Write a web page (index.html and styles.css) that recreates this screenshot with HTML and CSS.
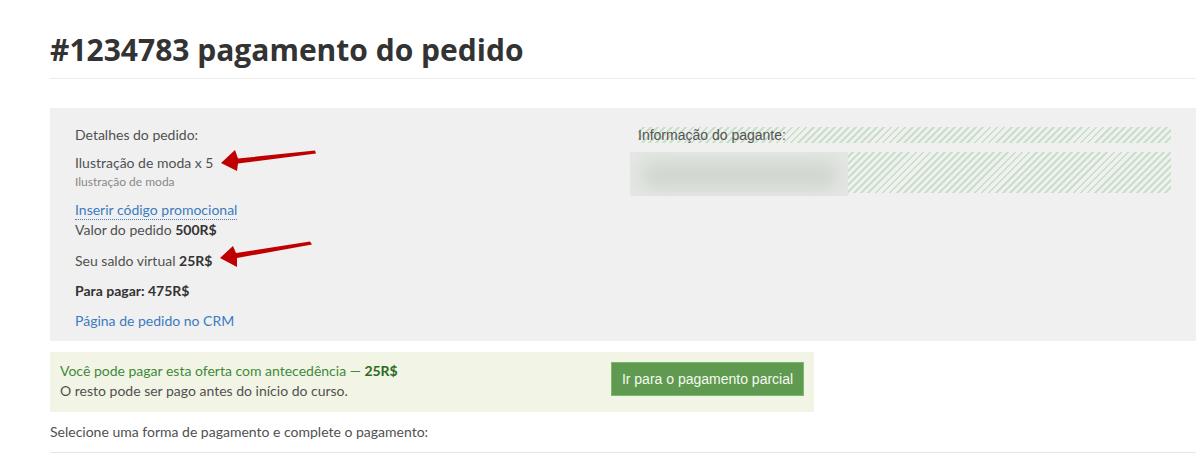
FILE: index.html
```html
<!DOCTYPE html>
<html lang="pt">
<head>
<meta charset="utf-8">
<title>Pagamento do pedido</title>
<link rel="stylesheet" href="styles.css">
</head>
<body>
<div class="page">
  <h1 class="title">#1234783 pagamento do pedido</h1>

  <section class="order">
    <div class="details">
      <div class="label">Detalhes do pedido:</div>
      <div class="item">Ilustração de moda x 5</div>
      <div class="item-sub">Ilustração de moda</div>
      <a class="promo" href="#">Inserir código promocional</a>
      <div class="row">Valor do pedido <b>500R$</b></div>
      <div class="row gap">Seu saldo virtual <b>25R$</b></div>
      <div class="row gap total">Para pagar: 475R$</div>
      <a class="crm" href="#">Página de pedido no CRM</a>
    </div>
    <div class="payer">
      <div class="payer-label hatch"><span>Informação do pagante:</span></div>
      <div class="payer-data hatch">
        <div class="blurred"><div class="blob"></div></div>
      </div>
    </div>
  </section>

  <section class="partial">
    <div class="partial-text">
      <div class="offer">Você pode pagar esta oferta com antecedência — <b>25R$</b></div>
      <div class="rest">O resto pode ser pago antes do início do curso.</div>
    </div>
    <button class="partial-btn" type="button">Ir para o pagamento parcial</button>
  </section>

  <div class="select">Selecione uma forma de pagamento e complete o pagamento:</div>
</div>

<svg class="arrows" width="1200" height="457" viewBox="0 0 1200 457" aria-hidden="true">
  <polygon fill="#c00000" points="221,163 235,150 238,158.5 315,150.5 316,153.5 238,163.5 237,171"/>
  <polygon fill="#c00000" points="220,258 233,246 236,253 310,241.5 312,244.5 237,258 237,267"/>
</svg>
</body>
</html>
```

FILE: styles.css
```css
html, body {
  margin: 0;
  padding: 0;
  background: #fff;
}
body {
  position: relative;
  width: 1200px;
  height: 457px;
  overflow: hidden;
  font-family: Lato, "Open Sans", Arial, sans-serif;
  font-size: 14px;
  line-height: 20px;
  color: #505050;
}
.page {
  margin-left: 50px;
  width: 1146px;
  display: flex;
  flex-direction: column;
}
.title {
  margin: 0;
  padding: 30px 0 8px;
  font-family: "Open Sans", Lato, Arial, sans-serif;
  font-size: 30px;
  line-height: 40px;
  font-weight: 700;
  color: #333;
  border-bottom: 1px solid #ececec;
}
.order {
  margin-top: 29px;
  background: #f0f0f0;
  padding: 17px 25px 10px;
  display: grid;
  grid-template-columns: 533px 533px;
  column-gap: 30px;
  height: 206px;
}
.details {
  display: flex;
  flex-direction: column;
  align-items: flex-start;
}
.item { margin-top: 8px; }
.item-sub {
  margin-top: 1px;
  font-size: 12px;
  line-height: 16px;
  color: #888;
}
.promo {
  margin-top: 10px;
  color: #3b7bbf;
  text-decoration: none;
  border-bottom: 1px dotted #3b7bbf;
  line-height: 18px;
  height: 18px;
  padding-top: 1px;
}
.row { color: #505050; }
.row b { color: #333; font-weight: 700; }
.gap { margin-top: 11px; }
.total { margin-top: 10px; font-weight: 700; color: #333; }
.crm {
  margin-top: 10px;
  color: #3b7bbf;
  text-decoration: none;
}
.payer {
  display: flex;
  flex-direction: column;
  padding-top: 2px;
}
.hatch {
  background: repeating-linear-gradient(-45deg, #f0f0f0 0 3px, #c8e0c8 3px 5px);
}
.payer-label {
  height: 16px;
  font-family: "Liberation Sans", Arial, sans-serif;
  font-size: 14px;
  line-height: 16px;
  color: #555;
}
.payer-data {
  margin-top: 9px;
  height: 41px;
}
.blurred {
  margin-left: -8px;
  width: 218px;
  height: 44px;
  background: #e4e7e3;
  overflow: hidden;
}
.blob {
  margin: 10px 0 0 12px;
  width: 196px;
  height: 26px;
  background: #d0d5cf;
  filter: blur(9px);
  border-radius: 10px;
}
.partial {
  margin-top: 11px;
  width: 764px;
  box-sizing: border-box;
  background: #f2f5e6;
  padding: 9px 10px 11px;
  display: flex;
  justify-content: space-between;
  align-items: flex-start;
  height: 60px;
}
.offer { color: #3f8a3a; }
.offer b { color: #2c6a1c; font-weight: 700; }
.rest { color: #505050; }
.partial-btn {
  width: 193px;
  height: 34px;
  background: #5f9a50;
  border: 1px solid #79b96a;
  color: #f4fbf0;
  font-family: "Liberation Sans", Arial, sans-serif;
  font-size: 14px;
  padding: 0;
  margin-top: 1px;
  cursor: pointer;
}
.select {
  margin-top: 10px;
  padding-bottom: 10px;
  border-bottom: 1px solid #e6e6e6;
}
.arrows {
  position: absolute;
  left: 0;
  top: 0;
  pointer-events: none;
}
```
